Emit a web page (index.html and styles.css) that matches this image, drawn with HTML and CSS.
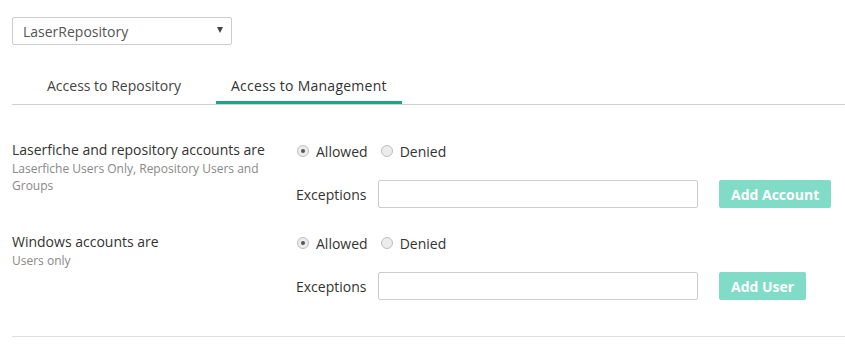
FILE: index.html
```html
<!DOCTYPE html>
<html>
<head>
<meta charset="utf-8">
<link rel="stylesheet" href="styles.css">
</head>
<body>
<div class="page">
  <div class="select">
    <span class="select-text">LaserRepository</span>
    <span class="select-arrow"></span>
  </div>
  <div class="tabs">
    <div class="tab">Access to Repository</div>
    <div class="tab active">Access to Management</div>
  </div>
  <div class="content">
    <div class="section">
      <div class="label-col">
        <div class="label">Laserfiche and repository accounts are</div>
        <div class="sublabel">Laserfiche Users Only, Repository Users and Groups</div>
      </div>
      <div class="control-col">
        <div class="radio-row">
          <span class="radio checked"></span><span class="radio-label">Allowed</span>
          <span class="radio"></span><span class="radio-label">Denied</span>
        </div>
        <div class="exc-row">
          <span class="exc-label">Exceptions</span>
          <span class="input"></span>
          <span class="btn">Add Account</span>
        </div>
      </div>
    </div>
    <div class="section">
      <div class="label-col">
        <div class="label">Windows accounts are</div>
        <div class="sublabel">Users only</div>
      </div>
      <div class="control-col">
        <div class="radio-row">
          <span class="radio checked"></span><span class="radio-label">Allowed</span>
          <span class="radio"></span><span class="radio-label">Denied</span>
        </div>
        <div class="exc-row">
          <span class="exc-label">Exceptions</span>
          <span class="input"></span>
          <span class="btn">Add User</span>
        </div>
      </div>
    </div>
  </div>
</div>
</body>
</html>
```
FILE: styles.css
```css
html, body { margin: 0; padding: 0; background: #fff; }
body { font-family: "Open Sans", "Liberation Sans", sans-serif; font-size: 14px; color: #333; }
.page { padding: 17px 0 0 12px; }
.select {
  box-sizing: border-box; width: 220px; height: 28px;
  border: 1px solid #ccc; border-radius: 2px;
  display: flex; align-items: center; justify-content: space-between;
  padding: 0 8px 0 10px; color: #555;
}
.select-arrow {
  width: 0; height: 0;
  border-left: 3px solid transparent; border-right: 3px solid transparent;
  border-top: 6px solid #444; margin-top: -2px;
}
.tabs {
  display: flex; margin-top: 23px; border-bottom: 1px solid #d0d0d0;
}
.tab {
  margin-left: 20px; padding: 8px 15px 5px; line-height: 20px;
  border-bottom: 3px solid transparent; color: #444;
}
.tab.active { border-bottom-color: #1fa386; color: #333; letter-spacing: 0.25px; }
.content { padding-top: 36px; padding-bottom: 36px; border-bottom: 1px solid #ddd; }
.section { display: flex; }
.section + .section { margin-top: 25px; }
.label-col { width: 284px; }
.label { line-height: 20px; margin-top: -1px; }
.sublabel { font-size: 12px; line-height: 17px; color: #888; width: 260px; }
.radio-row { display: flex; align-items: center; height: 20px; }
.radio {
  box-sizing: border-box; width: 12px; height: 12px; border-radius: 50%;
  border: 1px solid #bdbdbd; background: #ececec; margin-left: 1px; position: relative;
}
.radio.checked::after {
  content: ""; position: absolute; left: 3px; top: 3px; width: 4px; height: 4px;
  border-radius: 50%; background: #555;
}
.radio-label { margin-left: 7px; margin-right: 12px; }
.exc-row { display: flex; align-items: center; margin-top: 19px; }
.exc-label { width: 82px; }
.input {
  box-sizing: border-box; width: 320px; height: 28px;
  border: 1px solid #ccc; border-radius: 2px;
}
.btn {
  box-sizing: border-box; height: 28px; margin-left: 21px; padding: 0 12px;
  background: #80dcc7; color: #fff; font-weight: 700; border-radius: 2px;
  display: flex; align-items: center;
}
```
